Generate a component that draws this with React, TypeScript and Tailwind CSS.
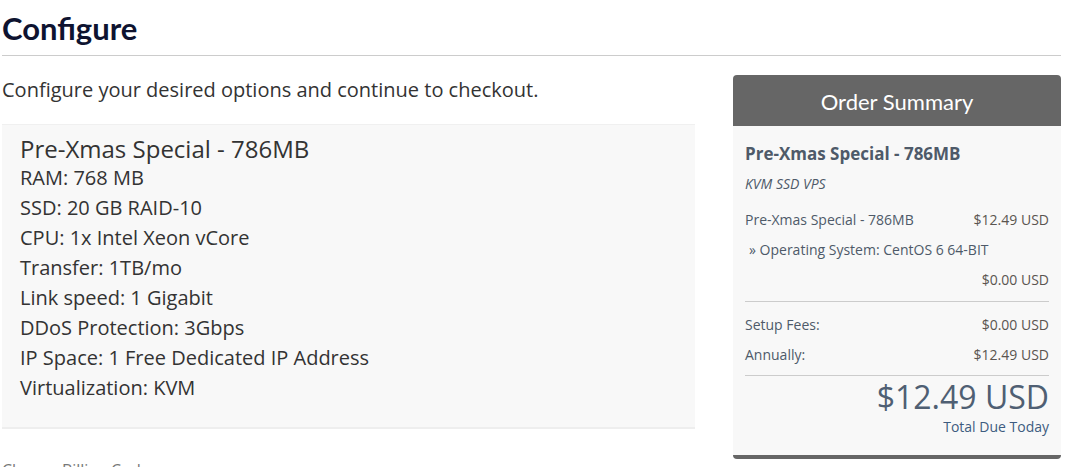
import React from 'react';

interface SummaryRow {
  label: string;
  price: string;
}

const specs: string[] = [
  'RAM: 768 MB',
  'SSD: 20 GB RAID-10',
  'CPU: 1x Intel Xeon vCore',
  'Transfer: 1TB/mo',
  'Link speed: 1 Gigabit',
  'DDoS Protection: 3Gbps',
  'IP Space: 1 Free Dedicated IP Address',
  'Virtualization: KVM',
];

const totals: SummaryRow[] = [
  { label: 'Setup Fees:', price: '$0.00 USD' },
  { label: 'Annually:', price: '$12.49 USD' },
];

const OrderSummary: React.FC = () => {
  return (
    <div className="w-[328px] shrink-0 text-[#4e5a69]">
      <div className="h-[51px] rounded-t-[4px] bg-[#666666] flex items-center justify-center">
        <h2 className="text-[22px] text-white font-['Lato',sans-serif] leading-none pt-[3px]">
          Order Summary
        </h2>
      </div>
      <div className="bg-[#f8f8f8] rounded-b-[4px] border-b-4 border-[#666666] px-3 pt-[16px] pb-[19px] text-[14px]">
        <div className="text-[17px] font-bold leading-[24px]">Pre-Xmas Special - 786MB</div>
        <div className="mt-[9px] text-[14px] italic leading-[18px]">KVM SSD VPS</div>

        <div className="mt-[11px]">
          <div className="h-[30px] flex items-center justify-between">
            <span>Pre-Xmas Special - 786MB</span>
            <span className="text-[#5a5550]">$12.49 USD</span>
          </div>
          <div className="h-[30px] flex items-center pl-[4px]">
            <span>» Operating System: CentOS 6 64-BIT</span>
          </div>
          <div className="h-[30px] flex items-center justify-end">
            <span className="text-[#5a5550]">$0.00 USD</span>
          </div>
        </div>

        <div className="mt-[7px] border-t border-[#cccccc]" />

        <div className="mt-[7px]">
          {totals.map((row) => (
            <div key={row.label} className="h-[30px] flex items-center justify-between">
              <span>{row.label}</span>
              <span className="text-[#5a5550]">{row.price}</span>
            </div>
          ))}
        </div>

        <div className="mt-[6px] border-t border-[#cccccc]" />

        <div className="text-right">
          <div className="text-[32px] leading-[42px] text-[#4f5f73]">$12.49 USD</div>
          <div className="text-[14px] leading-[18px] text-[#3e5c80]">Total Due Today</div>
        </div>
      </div>
    </div>
  );
};

export default function App() {
  return (
    <div className="w-[1074px] h-[467px] overflow-hidden bg-white pl-[2px] font-['Open_Sans',sans-serif]">
      <div className="w-[1059px]">
        <h1 className="pt-[10px] pb-[9px] border-b border-[#cccccc] text-[31px] leading-[36px] font-bold text-[#0e1330] font-['Lato',sans-serif]">
          Configure
        </h1>

        <div className="mt-[19px] flex gap-[38px]">
          <div className="flex-1">
            <p className="mt-[2px] text-[20px] leading-[26px] text-[#333333]">
              Configure your desired options and continue to checkout.
            </p>

            <div className="mt-[21px] bg-[#f8f8f8] border-t border-[#f0f0f0] border-b-2 border-b-[#eeeeee] pl-[18px] pt-[10px] pb-[24px] text-[#333333]">
              <div className="text-[24px] leading-[28px]">Pre-Xmas Special - 786MB</div>
              <ul>
                {specs.map((spec) => (
                  <li key={spec} className="text-[20px] leading-[30px]">
                    {spec}
                  </li>
                ))}
              </ul>
            </div>

            <div className="mt-[30px] text-[16px] leading-[22px] text-[#777777]">
              Choose Billing Cycle
            </div>
          </div>

          <OrderSummary />
        </div>
      </div>
    </div>
  );
}
